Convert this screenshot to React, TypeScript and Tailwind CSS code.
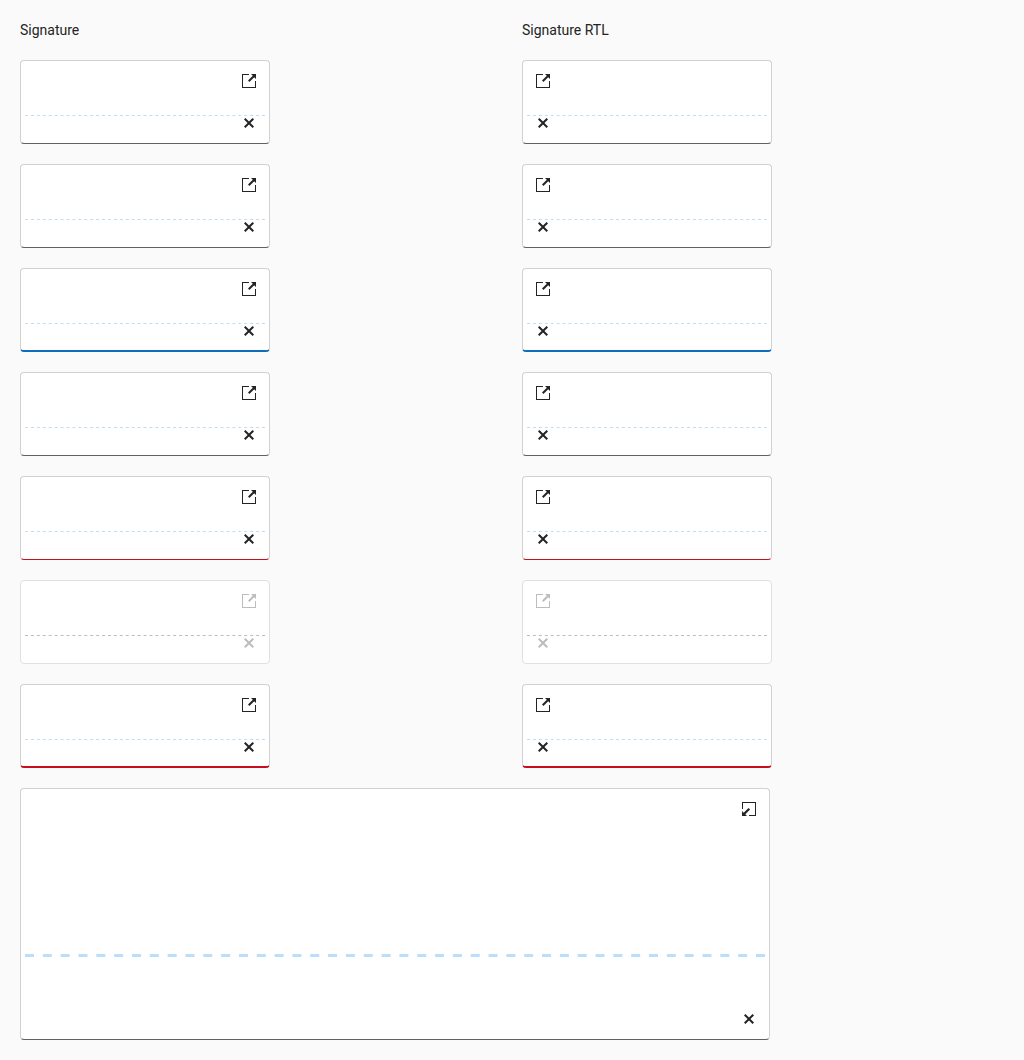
type Tone = 'normal' | 'focus' | 'invalid' | 'disabled' | 'invalidFocus';

const bottoms: Record<Tone, string> = {
  normal: 'border-b border-b-[#616161]',
  focus: 'border-b-2 border-b-[#0f6cbd]',
  invalid: 'border-b border-b-[#c50f1f]',
  disabled: 'border-b border-b-[#e0e0e0]',
  invalidFocus: 'border-b-2 border-b-[#c50f1f]',
};

const tones: Tone[] = ['normal', 'normal', 'focus', 'normal', 'invalid', 'disabled', 'invalidFocus'];

function OpenIcon() {
  return (
    <svg className="block size-4" viewBox="0 0 16 16" fill="currentColor">
      <path d="M1 1h7v1H2v12h12V8h1v7H1V1z" />
      <path d="M10 1h5v5l-1.8-1.8L8.4 9 7 7.6l4.8-4.8L10 1z" />
    </svg>
  );
}

function MinimizeIcon() {
  return (
    <svg className="block size-4" viewBox="0 0 16 16" fill="currentColor">
      <path d="M1 8V1h14v14H8v-1h6V2H2v6H1z" />
      <path d="M1 10v5h5l-1.7-1.7L9.1 8.5 7.5 6.9l-4.8 4.8L1 10z" />
    </svg>
  );
}

function ClearIcon() {
  return (
    <svg className="block size-4" viewBox="0 0 512 512" fill="currentColor">
      <path d="M416 141.3 370.7 96 256 210.7 141.3 96 96 141.3 210.7 256 96 370.7l45.3 45.3L256 301.3 370.7 416l45.3-45.3L301.3 256 416 141.3z" />
    </svg>
  );
}

function SignatureLine({ large, disabled }: { large: boolean; disabled: boolean }) {
  return large ? (
    <svg className="absolute left-1 top-[165px] h-[3px] w-[740px] text-[#bbdefb]">
      <line x1="0" y1="1.5" x2="740" y2="1.5" stroke="currentColor" strokeWidth="3" strokeDasharray="9 8.829" />
    </svg>
  ) : (
    <svg className={`absolute left-1 top-[54px] h-px w-60 ${disabled ? 'text-[#bdbdbd]' : 'text-[#c3dcf0]'}`}>
      <line x1="0" y1="0.5" x2="240" y2="0.5" stroke="currentColor" strokeWidth="1" strokeDasharray="3 2.925" />
    </svg>
  );
}

function Signature({ tone, rtl = false, large = false }: { tone: Tone; rtl?: boolean; large?: boolean }) {
  const disabled = tone === 'disabled';
  return (
    <div
      dir={rtl ? 'rtl' : 'ltr'}
      className={`relative flex flex-col items-end justify-between rounded border-x border-t bg-white px-3 pt-3 ${
        large ? 'h-[252px] w-[750px] pb-3' : 'h-[84px] w-[250px]'
      } ${large ? '' : tone === 'focus' || tone === 'invalidFocus' ? 'pb-[11px]' : 'pb-3'} ${
        disabled ? 'border-x-[#e0e0e0] border-t-[#e0e0e0] text-[#bdbdbd]' : 'border-x-[#d1d1d1] border-t-[#d1d1d1] text-[#242424]'
      } ${bottoms[tone]}`}
    >
      {large ? <MinimizeIcon /> : <OpenIcon />}
      <SignatureLine large={large} disabled={disabled} />
      <ClearIcon />
    </div>
  );
}

export default function App() {
  return (
    <main className="h-[1060px] bg-[#fafafa] p-5 font-[Roboto,sans-serif] text-sm leading-5 text-[#242424]">
      <div className="grid grid-cols-[482px_482px] gap-5">
        <div>Signature</div>
        <div>Signature RTL</div>
        {tones.map((tone, i) => [
          <Signature key={`l${i}`} tone={tone} />,
          <Signature key={`r${i}`} tone={tone} rtl />,
        ])}
        <Signature tone="normal" large />
      </div>
    </main>
  );
}
